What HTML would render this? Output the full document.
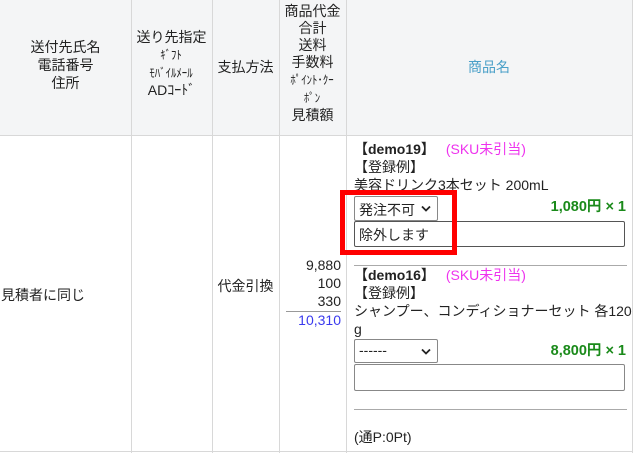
<!DOCTYPE html>
<html><head><meta charset="utf-8"><style>
body{margin:0;width:640px;height:453px;background:#fff;font-family:"Liberation Sans","Noto Sans CJK JP",sans-serif;font-size:14px;color:#222;position:relative;overflow:hidden}
.a{position:absolute;white-space:nowrap}
.c{text-align:center}
.hd{position:absolute;left:0;top:0;width:633px;height:135px;background:#f4f5f6}
.vl{position:absolute;width:1px;background:#d8d8d8}
.hl{position:absolute;height:1px;background:#d8d8d8}
.sm{font-size:12px;display:inline-block;transform:scaleX(0.9)}
.sel{position:absolute;border:1px solid #888;background:#fff;border-radius:2px;box-sizing:border-box}
.inp{position:absolute;border:1.5px solid #555;background:#fff;border-radius:2px;box-sizing:border-box}
.g{color:#1a8a1a;font-weight:bold}
.p{color:#ee33ee}
.chev{position:absolute;right:6px;top:8px}
</style></head><body>
<div class="hd"></div>
<div class="hl" style="left:0;top:135px;width:633px"></div>
<div class="hl" style="left:0;top:451px;width:633px"></div>
<div class="vl" style="left:131px;top:0;height:453px"></div>
<div class="vl" style="left:212px;top:0;height:453px"></div>
<div class="vl" style="left:279px;top:0;height:453px"></div>
<div class="vl" style="left:346px;top:0;height:453px"></div>
<div class="vl" style="left:632px;top:0;height:453px"></div>

<div class="a c" style="left:0;width:131px;top:38px;line-height:18px">送付先氏名<br>電話番号<br>住所</div>
<div class="a c" style="left:131px;width:81px;top:29px;line-height:17px">送り先指定<br><span class="sm">ｷﾞﾌﾄ</span><br><span class="sm">ﾓﾊﾞｲﾙﾒｰﾙ</span><br>ADｺｰﾄﾞ</div>
<div class="a c" style="left:212px;width:67px;top:57px">支払方法</div>
<div class="a c" style="left:279px;width:67px;top:3px;line-height:17px">商品代金<br>合計<br>送料<br>手数料<br><span class="sm">ﾎﾟｲﾝﾄ･ｸｰ</span><br><span class="sm">ﾎﾟﾝ</span><br>見積額</div>
<div class="a c" style="left:346px;width:286px;top:57px;color:#4aa0c8">商品名</div>

<div class="a" style="left:1px;top:285px">見積者に同じ</div>
<div class="a c" style="left:212px;width:67px;top:276px">代金引換</div>
<div class="a" style="right:299px;top:256px;line-height:18px;text-align:right">9,880<br>100<br>330</div>
<div class="hl" style="left:286px;top:311px;width:55px;background:#999"></div>
<div class="a" style="right:299px;top:312px;color:#3a3aee">10,310</div>

<div class="a" style="left:354px;top:140px;line-height:18px"><b>【demo19】</b>　 <span class="p">(SKU未引当)</span><br>【登録例】<br>美容ドリンク3本セット 200mL</div>
<div class="sel" style="left:354px;top:196px;width:84px;height:25px;padding:3px 0 0 4px">発注不可<svg class="chev" width="10" height="7" viewBox="0 0 10 7"><path d="M1 1.5L5 5.5L9 1.5" fill="none" stroke="#222" stroke-width="1.8"/></svg></div>
<div class="a g" style="right:14px;top:195px;font-size:14.5px">1,080円 × 1</div>
<div class="inp" style="left:354px;top:221px;width:271px;height:26px;padding:3px 0 0 4px">除外します</div>
<div class="a" style="left:340px;top:190px;width:107px;height:55px;border:5px solid #f00"></div>
<div class="hl" style="left:354px;top:265px;width:273px;background:#aaa"></div>

<div class="a" style="left:354px;top:266px;line-height:18px"><b>【demo16】</b>　 <span class="p">(SKU未引当)</span><br>【登録例】<br>シャンプー、コンディショナーセット 各120<br>g</div>
<div class="sel" style="left:354px;top:339px;width:84px;height:24px;padding:2px 0 0 4px">------<svg class="chev" width="10" height="7" viewBox="0 0 10 7"><path d="M1 1.5L5 5.5L9 1.5" fill="none" stroke="#222" stroke-width="1.8"/></svg></div>
<div class="a g" style="right:14px;top:339px;font-size:14.5px">8,800円 × 1</div>
<div class="inp" style="left:354px;top:364px;width:271px;height:27px;border:1px solid #888"></div>
<div class="hl" style="left:354px;top:409px;width:273px;background:#aaa"></div>
<div class="a" style="left:354px;top:427px">(通P:0Pt)</div>
</body></html>
